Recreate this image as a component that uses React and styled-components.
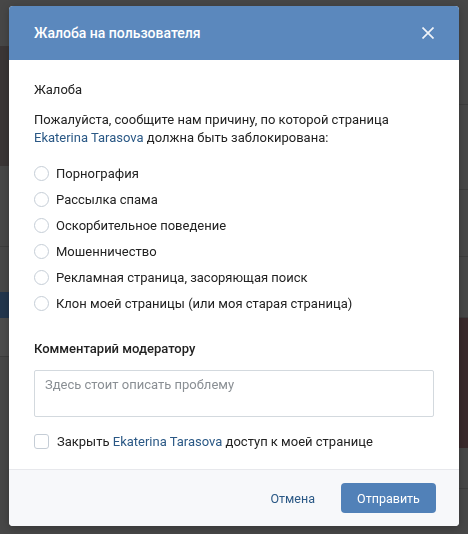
import React from 'react';
import styled, { createGlobalStyle } from 'styled-components';

const GlobalStyle = createGlobalStyle`
  html, body {
    margin: 0;
    padding: 0;
    background: #454545;
  }
  body {
    font-family: Roboto, "Open Sans", "Liberation Sans", sans-serif;
    font-size: 13px;
    color: #222;
  }
`

// dimmed page behind the modal
const Page = styled.div`
  width: 468px;
  height: 534px;
  display: flex;
  justify-content: space-between;
  background: #474747;
  overflow: hidden;
`
const Side = styled.div`
  width: 20px;
  display: flex;
  flex-direction: column;
  padding-top: 6px;
`
const Block = styled.div`
  height: ${p => p.h}px;
  background: ${p => p.bg || 'transparent'};
  border-bottom: ${p => (p.line ? '1px solid #3d3d3d' : 'none')};
`

const Overlay = styled.div`
  position: fixed;
  inset: 0;
  display: flex;
  justify-content: center;
  padding-top: 6px;
`
const Modal = styled.div`
  width: 450px;
  height: 520px;
  background: #fff;
  border-radius: 4px;
  overflow: hidden;
  display: flex;
  flex-direction: column;
  box-shadow: 0 2px 8px rgba(0, 0, 0, 0.25);
`
const Header = styled.div`
  height: 54px;
  flex-shrink: 0;
  background: #5b88bd;
  display: flex;
  align-items: center;
  justify-content: space-between;
  padding: 0 21px 0 25px;
`
const Title = styled.div`
  color: #fff;
  font-size: 14px;
  font-weight: 500;
`
const Close = styled.button`
  width: 20px;
  height: 20px;
  padding: 0;
  border: none;
  background: none;
  display: flex;
  align-items: center;
  justify-content: center;
  cursor: pointer;
`
const Body = styled.div`
  flex: 1;
  padding: 21px 25px 0;
`
const Label = styled.div`
  font-weight: ${p => (p.bold ? 500 : 400)};
  line-height: 18px;
  margin-bottom: ${p => p.mb || 0}px;
`
const Text = styled.div`
  line-height: 18px;
  margin-bottom: 17px;
`
const Link = styled.a`
  color: #2a5885;
  text-decoration: none;
`
const Radios = styled.div`
  display: flex;
  flex-direction: column;
  gap: 8px;
  margin-bottom: 28px;
`
const RadioRow = styled.label`
  display: flex;
  align-items: center;
  height: 18px;
  gap: 7px;
  cursor: pointer;
`
const RadioDot = styled.span`
  width: 15px;
  height: 15px;
  border: 1px solid #c5cdd6;
  border-radius: 50%;
  box-sizing: border-box;
  flex-shrink: 0;
  background: #fff;
`
const Textarea = styled.textarea`
  display: block;
  width: 100%;
  height: 47px;
  box-sizing: border-box;
  margin: 12px 0 15px;
  padding: 6px 10px;
  border: 1px solid #d3d9de;
  border-radius: 2px;
  resize: none;
  font-family: inherit;
  font-size: 13px;
  color: #222;
  &::placeholder {
    color: #8a8f94;
  }
`
const CheckRow = styled.label`
  display: flex;
  align-items: center;
  gap: 8px;
  height: 18px;
  cursor: pointer;
`
const CheckBox = styled.span`
  width: 15px;
  height: 15px;
  border: 1px solid #c5cdd6;
  border-radius: 3px;
  box-sizing: border-box;
  flex-shrink: 0;
`
const Footer = styled.div`
  height: 56px;
  flex-shrink: 0;
  border-top: 1px solid #e7e8ec;
  background: #f7f8fa;
  display: flex;
  align-items: center;
  justify-content: flex-end;
  padding: 0 23px;
  gap: 26px;
`
const Cancel = styled.button`
  border: none;
  background: none;
  font-family: inherit;
  font-size: 12.5px;
  color: #2a5885;
  padding: 0;
  cursor: pointer;
`
const Submit = styled.button`
  width: 95px;
  height: 30px;
  border: none;
  border-radius: 4px;
  background: #5181b8;
  color: #fff;
  font-family: inherit;
  font-size: 12.5px;
  cursor: pointer;
`

const reasons = [
  'Порнография',
  'Рассылка спама',
  'Оскорбительное поведение',
  'Мошенничество',
  'Рекламная страница, засоряющая поиск',
  'Клон моей страницы (или моя старая страница)',
];

export default function App() {
  return (
    <>
      <GlobalStyle />
      <Page>
        <Side>
          <Block h={40} />
          <Block h={120} bg="#3b3636" />
          <Block h={80} line />
          <Block h={45} />
          <Block h={26} bg="#23364d" />
          <Block h={38} bg="#4c4c4c" line />
          <Block h={80} />
        </Side>
        <Side>
          <Block h={98} line />
          <Block h={84} line />
          <Block h={66} line />
          <Block h={60} line />
          <Block h={130} bg="#3a2a2c" />
          <Block h={40} line />
        </Side>
      </Page>
      <Overlay>
        <Modal>
          <Header>
            <Title>Жалоба на пользователя</Title>
            <Close aria-label="Закрыть">
              <svg width="12" height="12" viewBox="0 0 12 12">
                <path d="M0.5 0.5L11.5 11.5M11.5 0.5L0.5 11.5" stroke="#fff" strokeWidth="1.7" strokeOpacity="0.9" />
              </svg>
            </Close>
          </Header>
          <Body>
            <Label mb={12}>Жалоба</Label>
            <Text>
              Пожалуйста, сообщите нам причину, по которой страница{' '}
              <Link href="#">Ekaterina Tarasova</Link> должна быть заблокирована:
            </Text>
            <Radios>
              {reasons.map(r => (
                <RadioRow key={r}>
                  <RadioDot />
                  {r}
                </RadioRow>
              ))}
            </Radios>
            <Label bold>Комментарий модератору</Label>
            <Textarea placeholder="Здесь стоит описать проблему" />
            <CheckRow>
              <CheckBox />
              <span>
                Закрыть <Link href="#">Ekaterina Tarasova</Link> доступ к моей странице
              </span>
            </CheckRow>
          </Body>
          <Footer>
            <Cancel>Отмена</Cancel>
            <Submit>Отправить</Submit>
          </Footer>
        </Modal>
      </Overlay>
    </>
  );
}
